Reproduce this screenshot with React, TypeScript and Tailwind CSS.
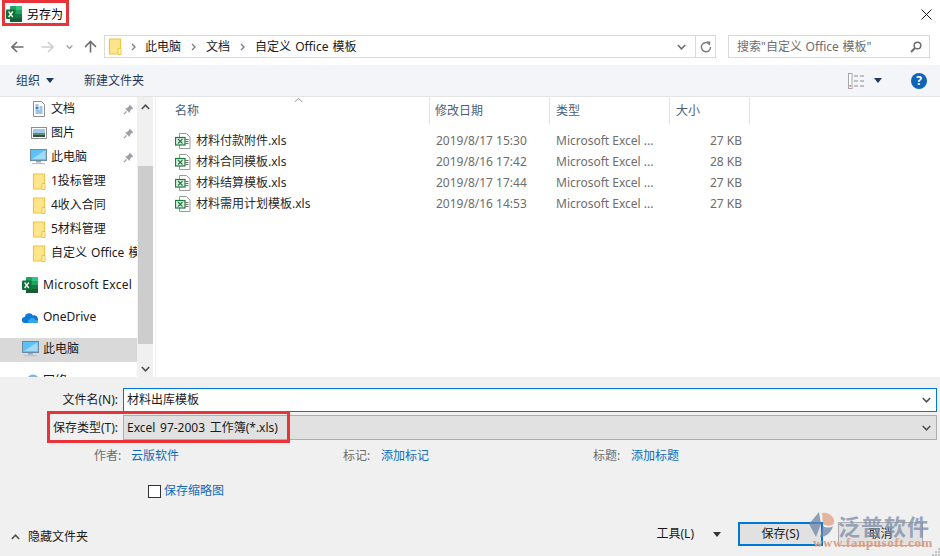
// @ts-nocheck
import { Fragment } from 'react'

const FONT = "font-['Noto_Sans','Noto_Sans_CJK_SC',sans-serif]"

function ExcelIcon({ size = 16 }) {
  return (
    <svg width={size} height={size} viewBox="0 0 16 16" className="shrink-0">
      <rect x="4" y="0" width="12" height="16" rx="1" fill="#21a366" />
      <rect x="10" y="0" width="6" height="4" fill="#33c481" />
      <rect x="10" y="4" width="6" height="4" fill="#21a366" />
      <rect x="4" y="8" width="6" height="4" fill="#107c41" />
      <rect x="10" y="8" width="6" height="4" fill="#107c41" />
      <rect x="4" y="12" width="12" height="4" fill="#185c37" />
      <rect x="0" y="3.5" width="9.5" height="9.5" rx="1" fill="#0f7038" />
      <path d="M2.6 5.5 L6.8 11 M6.8 5.5 L2.6 11" stroke="#fff" strokeWidth="1.3" />
    </svg>
  )
}

function FolderIcon() {
  return (
    <svg width="14" height="17" viewBox="0 0 14 17" className="shrink-0">
      <path d="M1.5 1h11v15h-11z" fill="#fde48d" stroke="#eec643" strokeWidth="1.2" />
      <path d="M10 10.5h3v6h-3z" fill="#fff3c4" stroke="#eec643" strokeWidth="1" />
    </svg>
  )
}

function PcIcon() {
  return (
    <svg width="17" height="16" viewBox="0 0 17 16" className="shrink-0">
      <rect x="0.5" y="0.5" width="16" height="11" fill="#5cc1f5" stroke="#6b8ca3" />
      <path d="M2 10 L14 2 H15.5 V10z" fill="#9fdcfb" />
      <rect x="6" y="12" width="5" height="1.5" fill="#8fa7b8" />
      <rect x="2" y="14" width="13" height="1.2" fill="#b4c4d0" />
    </svg>
  )
}

function DocIcon() {
  return (
    <svg width="12" height="16" viewBox="0 0 12 16" className="shrink-0">
      <path d="M.5.5h8l3 3v12H.5z" fill="#fff" stroke="#8f8f8f" />
      <path d="M2.5 4h3M6.5 6h3M6.5 8h3M2.5 10h7M2.5 12h7" stroke="#3d87c7" strokeWidth="1" />
      <rect x="2.5" y="5.5" width="3" height="3" fill="#3d87c7" />
    </svg>
  )
}

function PicIcon() {
  return (
    <svg width="16" height="12" viewBox="0 0 16 12" className="shrink-0">
      <rect x=".5" y=".5" width="15" height="11" fill="#fff" stroke="#8f8f8f" />
      <rect x="2" y="2" width="12" height="4" fill="#9fc9e8" />
      <rect x="2" y="6" width="12" height="2" fill="#5e8a6e" />
      <rect x="2" y="8" width="12" height="2" fill="#38513f" />
    </svg>
  )
}

function PinIcon() {
  return (
    <svg width="11" height="11" viewBox="0 0 11 11" className="shrink-0">
      <path d="M6.5.5 10.5 4.5 8.8 5 6.8 7.2 6.6 9 2 4.4 3.8 4.2 6 2.2z" fill="#9a9fa5" />
      <path d="M3.6 7.4 .8 10.2" stroke="#9a9fa5" strokeWidth="1.2" />
    </svg>
  )
}

function XlsIcon() {
  return (
    <svg width="17" height="16" viewBox="0 0 17 16" className="shrink-0">
      <path d="M4.5.5h7l3.5 3.5v11.5H4.5z" fill="#fff" stroke="#9a9a9a" />
      <path d="M10.5 6.5h3M10.5 8.5h3M10.500 10.5h3" stroke="#6f6f6f" />
      <rect x=".5" y="4.5" width="9.5" height="7.5" fill="#e3f1e6" stroke="#1c7a3e" strokeWidth="1.2" />
      <path d="M3 6 7.5 10.5M7.5 6 3 10.5" stroke="#1c7a3e" strokeWidth="1.1" />
    </svg>
  )
}

function Caret({ className = 'text-[#1f3a5f]' }) {
  return (
    <svg width="8" height="5" viewBox="0 0 8 5" className={className}>
      <path d="M0 0h8L4 5z" fill="currentColor" />
    </svg>
  )
}

function Chevron({ up = false, color = '#6d6d6d', width = 9, sw = 1.6 }) {
  return (
    <svg width={width} height="6" viewBox="0 0 9 6">
      <path d={up ? 'M.8 5 4.5 1.2 8.2 5' : 'M.8 1 4.5 4.8 8.2 1'} fill="none" stroke={color} strokeWidth={sw} />
    </svg>
  )
}

function Crumb() {
  return (
    <svg width="5" height="8" viewBox="0 0 5 8" className="shrink-0">
      <path d="M1 1 4 4 1 7" fill="none" stroke="#7d7d7d" strokeWidth="1.3" />
    </svg>
  )
}

const quick = [
  { icon: <DocIcon />, label: '文档', pin: true },
  { icon: <PicIcon />, label: '图片', pin: true },
  { icon: <PcIcon />, label: '此电脑', pin: true },
  { icon: <FolderIcon />, label: '1投标管理' },
  { icon: <FolderIcon />, label: '4收入合同' },
  { icon: <FolderIcon />, label: '5材料管理' },
  { icon: <FolderIcon />, label: '自定义 Office 模板' },
]

const files = [
  ['材料付款附件.xls', '2019/8/17 15:30', 'Microsoft Excel ...', '27 KB'],
  ['材料合同模板.xls', '2019/8/16 17:42', 'Microsoft Excel ...', '28 KB'],
  ['材料结算模板.xls', '2019/8/17 17:44', 'Microsoft Excel ...', '27 KB'],
  ['材料需用计划模板.xls', '2019/8/16 14:53', 'Microsoft Excel ...', '27 KB'],
]

function Sidebar() {
  return (
    <div className="w-[137px] shrink-0 overflow-hidden text-[12px] text-[#1a1a1a]">
      {quick.map((q) => (
        <div key={q.label} className="flex h-6 items-center">
          <div className="flex w-[51px] shrink-0 justify-end pr-[4px]">
            <div className="flex w-[17px] justify-center">{q.icon}</div>
          </div>
          <span className="flex-1 overflow-hidden whitespace-nowrap [word-spacing:1px]">{q.label}</span>
          {q.pin && <div className="ml-1 mr-[3px]"><PinIcon /></div>}
        </div>
      ))}
      <div className="mt-2 flex h-6 items-center pl-[22px]">
        <ExcelIcon />
        <span className="ml-[5px] tracking-[0.3px]">Microsoft Excel</span>
      </div>
      <div className="mt-2 flex h-6 items-center pl-[22px]">
        <svg width="16" height="11" viewBox="0 0 16 11" className="shrink-0">
          <path d="M3 11a3 3 0 0 1-.4-6A4.6 4.6 0 0 1 11 3.4 3.8 3.8 0 0 1 13 11z" fill="#0f78d4" />
          <path d="M7 11c-1.500-.4-1.600-3 .6-3.500C8.800 5.500 12.500 5.600 13 7.800c2-.2 3.400 1.500 2.800 3.200z" fill="#2ea6e8" />
        </svg>
        <span className="ml-[5px]">OneDrive</span>
      </div>
      <div className="mt-[9px] flex h-6 items-center bg-[#d9d9d9] pb-[2px] pl-[22px]">
        <PcIcon />
        <span className="ml-1">此电脑</span>
      </div>
      <div className="mt-[7px] flex h-6 items-center pl-[26px]">
        <svg width="14" height="14" viewBox="0 0 14 14" className="shrink-0">
          <circle cx="7" cy="7" r="6.500" fill="#7fb6de" />
          <path d="M3 3c2 0 3 1 3 3S3 7 3 3zM8 8c2-1 4 0 4 1s-3 3-4 2z" fill="#d5e6f2" />
        </svg>
        <span className="ml-[3px]">网络</span>
      </div>
    </div>
  )
}

function SidebarScroll() {
  return (
    <div className="flex w-[16px] shrink-0 flex-col bg-[#f0f0f0]">
      <div className="flex h-[20px] shrink-0 items-center justify-center"><Chevron up color="#505050" /></div>
      <div className="ml-px mt-[49px] h-[178px] shrink-0 bg-[#cdcdcd]" />
      <div className="flex flex-1 items-center justify-center pt-[16px]"><Chevron color="#505050" /></div>
    </div>
  )
}

function FileList() {
  return (
    <div className="min-w-0 flex-1 border-l border-[#f0f0f0] ml-[2px]">
      <div className="relative flex h-[27px] text-[12px] text-[#4c607a]">
        <div className="w-[274px] shrink-0 border-r border-[#e5e5e5] pl-[19px] pt-[5px]">名称</div>
        <div className="w-[120px] shrink-0 border-r border-[#e5e5e5] pl-[5px] pt-[5px]">修改日期</div>
        <div className="w-[120px] shrink-0 border-r border-[#e5e5e5] pl-[6px] pt-[5px]">类型</div>
        <div className="w-[80px] shrink-0 border-r border-[#e5e5e5] pl-[6px] pt-[5px]">大小</div>
        <div className="absolute left-[138px] top-0"><Chevron up color="#9a9a9a" sw={1} /></div>
      </div>
      <div className="mt-[6px] text-[12px]">
        {files.map((f) => (
          <div key={f[0]} className="flex h-[21px] items-center">
            <div className="flex w-[280px] shrink-0 items-center pl-[19px] text-[#2a2a2a]">
              <XlsIcon />
              <span className="ml-1 whitespace-nowrap">{f[0]}</span>
            </div>
            <div className="w-[120px] shrink-0 text-[#6d6d6d]">{f[1]}</div>
            <div className="w-[120px] shrink-0 text-[#6d6d6d]">{f[2]}</div>
            <div className="w-[66px] shrink-0 text-right text-[#6d6d6d]">{f[3]}</div>
          </div>
        ))}
      </div>
    </div>
  )
}

function Meta({ label, value, labelW, w }) {
  return (
    <div className="flex shrink-0" style={{ width: w }}>
      <span className="text-[#6d6d6d]" style={{ width: labelW }}>{label}</span>
      <span className="text-[#0f6cbd]">{value}</span>
    </div>
  )
}

export default function App() {
  return (
    <div className={`${FONT} relative flex h-[556px] w-[940px] flex-col overflow-hidden bg-white`}>
      {/* title */}
      <div className="flex h-[35px] shrink-0 items-start pl-[6px] pt-[6px] text-[12px] text-black">
        <ExcelIcon />
        <span className="ml-[5px] leading-[18px]">另存为</span>
        <svg width="11" height="11" viewBox="0 0 11 11" className="ml-auto mr-[8px] mt-[3px]">
          <path d="M.5.5l10 10M10.500.5l-10 10" stroke="#1a1a1a" strokeWidth="1" />
        </svg>
      </div>

      {/* address */}
      <div className="flex h-[23px] shrink-0 items-center">
        <div className="flex w-[104px] shrink-0 items-center pl-[11px]">
          <svg width="13" height="12" viewBox="0 0 13 12"><path d="M12.500 6H1.500M6 1 1 6l5 5" fill="none" stroke="#6d6d6d" strokeWidth="1.600" /></svg>
          <svg width="13" height="12" viewBox="0 0 13 12" className="ml-[17px]"><path d="M.5 6h11M7 1l5 5-5 5" fill="none" stroke="#cfcfcf" strokeWidth="1.600" /></svg>
          <div className="ml-[12px]"><Chevron width={7} color="#9a9a9a" /></div>
          <svg width="13" height="13" viewBox="0 0 13 13" className="ml-[11px]"><path d="M6.500 12.500V1.500M1 7l5.500-5.500L12 7" fill="none" stroke="#6d6d6d" strokeWidth="1.600" /></svg>
        </div>
        <div className="flex h-[23px] w-[612px] shrink-0 items-center border border-[#d9d9d9] text-[12px] text-[#1a1a1a]">
          <div className="ml-[3px]"><FolderIcon /></div>
          <div className="ml-[9px]"><Crumb /></div>
          <span className="ml-[9px]">此电脑</span>
          <div className="ml-[10px]"><Crumb /></div>
          <span className="ml-[10px]">文档</span>
          <div className="ml-[10px]"><Crumb /></div>
          <span className="ml-[10px] [word-spacing:1px]">自定义 Office 模板</span>
          <div className="ml-auto mr-[9px]"><Chevron color="#6d6d6d" /></div>
          <div className="flex h-full w-[20px] items-center justify-center border-l border-[#d9d9d9]">
            <svg width="12" height="12" viewBox="0 0 12 12">
              <path d="M9.800 3.500A4.600 4.600 0 1 0 10.600 6" fill="none" stroke="#7d7d7d" strokeWidth="1.500" />
              <path d="M6.500 .2 10.500 .8 9.800 4.800z" fill="#7d7d7d" />
            </svg>
          </div>
        </div>
        <div className="ml-[12px] flex h-[23px] w-[202px] shrink-0 items-center border border-[#d9d9d9] pl-[8px] pr-[7px] text-[12px] text-[#6d6d6d]">
          <span className="whitespace-nowrap [word-spacing:0.5px]">搜索"自定义 Office 模板"</span>
          <svg width="12" height="12" viewBox="0 0 12 12" className="ml-auto">
            <circle cx="7.500" cy="4.500" r="3.300" fill="none" stroke="#6d6d6d" strokeWidth="1.500" />
            <path d="M5 7 1 11" stroke="#6d6d6d" strokeWidth="2" />
          </svg>
        </div>
      </div>

      {/* toolbar */}
      <div className="mt-[7px] flex h-[32px] shrink-0 items-center border-b border-[#e5e5e5] bg-[#f3f5f8] pl-[16px] text-[12px] text-[#1f3a5f]">
        <span>组织</span>
        <div className="ml-[6px]"><Caret /></div>
        <span className="ml-[30px]">新建文件夹</span>
        <svg width="17" height="16" viewBox="0 0 17 16" className="ml-auto">
          <rect x=".5" y=".5" width="3.500" height="15" fill="#fff" stroke="#a5a5a5" />
          <path d="M6 3h4M12 3h4M6 8h4M12 8h4M6 13h4M12 13h4" stroke="#8d8d8d" />
          <rect x="1.500" y="12" width="1.500" height="1.500" fill="#d65b5b" />
        </svg>
        <div className="ml-[9px]"><Caret /></div>
        <div className="ml-[29px] mr-[13px] flex h-4 w-4 items-center justify-center rounded-full bg-[#0f63b8] text-[12px] font-bold leading-none text-white">?</div>
      </div>

      {/* body */}
      <div className="flex h-[280px] shrink-0 overflow-hidden">
        <Sidebar />
        <SidebarScroll />
        <FileList />
      </div>

      {/* form */}
      <div className="flex flex-1 flex-col bg-[#f0f0f0] text-[12px] text-[#1a1a1a]">
        <div className="mt-[11px] flex h-[24px] items-center pr-[3px]">
          <span className="w-[118px] shrink-0 text-right">文件名(N):</span>
          <div className="ml-[5px] flex h-full flex-1 items-center justify-between border border-[#0078d7] bg-white pl-[3px] pr-[5px]">
            <span>材料出库模板</span>
            <Chevron color="#505050" />
          </div>
        </div>
        <div className="mt-[3px] flex h-[25px] items-center pr-[3px]">
          <span className="w-[118px] shrink-0 text-right">保存类型(T):</span>
          <div className="ml-[5px] flex h-full flex-1 items-center justify-between border border-[#adadad] bg-[#e1e1e1] pl-[3px] pr-[5px]">
            <span className="[word-spacing:1.5px]">Excel 97-2003 工作簿(*.xls)</span>
            <Chevron color="#505050" />
          </div>
        </div>
        <div className="mt-[7px] flex pl-[94px]">
          <Meta label="作者:" value="云版软件" labelW={37} w={249} />
          <Meta label="标记:" value="添加标记" labelW={38} w={250} />
          <Meta label="标题:" value="添加标题" labelW={38} w={100} />
        </div>
        <div className="mt-[17px] flex items-center pl-[148px]">
          <div className="h-[13px] w-[13px] border border-[#333] bg-white" />
          <span className="ml-[3px] text-[#0f6cbd]">保存缩略图</span>
        </div>
        <div className="mt-[22px] flex items-center pr-[17px]">
          <div className="ml-[11px] mt-[6px]"><Chevron up color="#505050" /></div>
          <span className="ml-[8px] mt-[6px]">隐藏文件夹</span>
          <span className="ml-auto">工具(L)</span>
          <div className="ml-[19px]"><Caret className="text-[#333]" /></div>
          <div className="ml-[17px] flex h-[24px] w-[85px] items-center justify-center border-2 border-[#0078d7] bg-[#e1e1e1]">保存(S)</div>
          <div className="ml-[15px] flex h-[24px] w-[85px] items-center justify-center border border-[#adadad] bg-[#e1e1e1]">取消</div>
        </div>
      </div>

      {/* annotations */}
      <div className="absolute left-[2px] top-0 h-[26px] w-[67px] border-[3px] border-[#ea3338]" />
      <div className="absolute left-[47px] top-[411px] h-[32px] w-[243px] border-[3px] border-[#ea3338]" />

      {/* resize grip */}
      <svg width="8" height="8" viewBox="0 0 8 8" className="absolute bottom-0 right-0">
        <path d="M6 0h2v2H6zM3 3h2v2H3zM6 3h2v2H6zM0 6h2v2H0zM3 6h2v2H3zM6 6h2v2H6z" fill="#c4c4c4" />
      </svg>

      {/* watermark */}
      <div className="absolute left-[811px] top-[510px] flex flex-col opacity-75">
        <div className="flex items-center">
          <svg width="26" height="30" viewBox="0 0 26 30" className="-ml-[2px]">
            <path d="M10 2 0 14l7 13 5-13z" fill="#6d86a8" />
            <path d="M13 3c7-1 13 4 12 10-1 3-6 4-11 1z" fill="#e2a184" />
            <path d="M14 16c3 2 7 2 10 0-2 7-7 11-13 11z" fill="#6d86a8" />
          </svg>
          <span className="ml-[3px] text-[22px] font-bold leading-none tracking-[1px] text-[#7b8ca8] font-['Noto_Sans_CJK_SC',sans-serif]">泛普软件</span>
        </div>
      </div>
      <div className="absolute left-[813px] top-[533px] font-['Liberation_Serif',serif] text-[13px] font-bold tracking-[0.6px] text-[#dc9f85]">www.fanpusoft.com</div>
    </div>
  )
}
